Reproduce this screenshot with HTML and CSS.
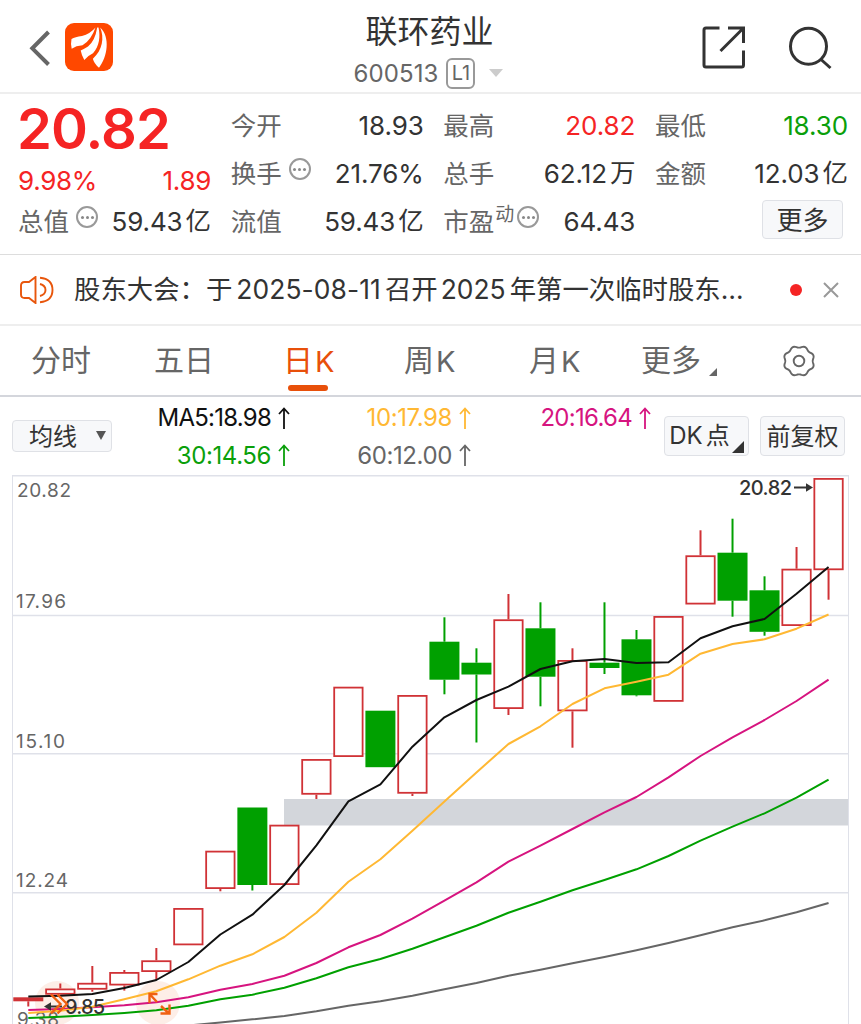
FILE: index.html
```html
<!DOCTYPE html>
<html lang="zh-CN">
<head>
<meta charset="utf-8">
<title>联环药业 600513</title>
<link rel="stylesheet" href="styles.css">
</head>
<body>
<div class="app">
  <header class="header">
    <div class="header-left">
      <svg class="back" width="24" height="40" viewBox="0 0 24 40"><path d="M21.500 4 5.300 20.300 21.500 36.500" fill="none" stroke="#666" stroke-width="4"/></svg>
      <svg class="logo" width="48" height="48" viewBox="0 0 48 48">
        <rect width="48" height="48" rx="9" fill="#ff4800"/>
        <path d="M30.500 4.500Q25 11 17 13Q10 14 6.500 16Q5.500 20.500 6.700 25.700Q11 22.800 17.500 22.300Q26 17.500 30.500 4.500Z" fill="#fff"/>
        <path d="M32.200 4.500Q30 18 23 23.500Q19 26 15.700 27.500Q16.500 32 19.300 37Q23 32.500 28 30.200C34.500 23.500 35.500 13 33.500 4.500Z" fill="#fff"/>
        <path d="M35.200 4.500C39.500 15 37.500 27 27.900 35.700Q29 40.500 34 44.700C42.500 34 45.500 14 35.200 4.500Z" fill="#fff"/>
      </svg>
    </div>
    <div class="title-block">
      <h1 class="title">联环药业</h1>
      <div class="code-row">
        <span class="code">600513</span><span class="level">L1</span>
        <svg width="14" height="8" viewBox="0 0 14 8"><path d="M0 0H14L7 8Z" fill="#ccc"/></svg>
      </div>
    </div>
    <div class="header-right">
      <svg width="44" height="44" viewBox="0 0 44 44" fill="none" stroke="#333" stroke-width="3">
        <path d="M17.500 2H4Q2 2 2 4V39Q2 41 4 41H39.500Q41.500 41 41.500 39V24.500"/><path d="M26 2H41.500V17M41 2.500 18.500 25"/>
      </svg>
      <svg width="44" height="44" viewBox="0 0 44 44" fill="none" stroke="#333" stroke-width="3">
        <circle cx="20.500" cy="20.300" r="18"/><path d="M32.500 33 42.500 42"/>
      </svg>
    </div>
  </header>

  <section class="quote">
    <div class="quote-main">
      <div class="price">20.82</div>
      <div class="change"><span>9.98%</span><span>1.89</span></div>
      <div class="cell"><span class="label">总值<i class="tip"></i></span><span class="val"><b>59.43</b><i class="unit">亿</i></span></div>
    </div>
    <div class="quote-col">
      <div class="cell"><span class="label">今开</span><span class="val">18.93</span></div>
      <div class="cell"><span class="label">换手<i class="tip"></i></span><span class="val">21.76%</span></div>
      <div class="cell"><span class="label">流值</span><span class="val"><b>59.43</b><i class="unit">亿</i></span></div>
    </div>
    <div class="quote-col">
      <div class="cell"><span class="label">最高</span><span class="val up">20.82</span></div>
      <div class="cell"><span class="label">总手</span><span class="val"><b>62.12</b><i class="unit">万</i></span></div>
      <div class="cell"><span class="label">市盈<em class="dyn">动</em><i class="tip tight"></i></span><span class="val">64.43</span></div>
    </div>
    <div class="quote-col">
      <div class="cell"><span class="label">最低</span><span class="val down">18.30</span></div>
      <div class="cell"><span class="label">金额</span><span class="val"><b>12.03</b><i class="unit">亿</i></span></div>
      <div class="cell end"><button class="btn more">更多</button></div>
    </div>
  </section>

  <section class="notice">
    <svg class="horn" width="34" height="28" viewBox="0 0 34 28" fill="none" stroke="#e8560c" stroke-width="1.900">
      <path d="M15.500 1V27L9 22H4.500Q1 22 1 18.500V9.500Q1 6 4.500 6H9Z"/><path d="M20 8Q25.500 9.500 25.500 14T20 20"/><path d="M20 1.800Q32.500 3 32.500 14T20 26.200"/>
    </svg>
    <div class="notice-text"><span>股东大会：</span><span>于</span><b class="date">2025-08-11</b><span>召开</span><b class="year">2025</b><span>年第一次临时股东</span><span class="dots">…</span></div>
    <i class="dot"></i>
    <svg width="16" height="16" viewBox="0 0 16 16"><path d="M1 1 15 15M15 1 1 15" stroke="#999" stroke-width="2"/></svg>
  </section>

  <nav class="tabs">
    <span class="tab t1">分时</span>
    <span class="tab t2">五日</span>
    <span class="tab t3 active">日<b>K</b></span>
    <span class="tab t4">周<b>K</b></span>
    <span class="tab t5">月<b>K</b></span>
    <span class="tab t6">更多<svg width="8" height="8" viewBox="0 0 8 8"><path d="M8 0V8H0Z" fill="#666"/></svg></span>
    <svg class="gear" width="34" height="32" viewBox="-17 -16 34 32" fill="none" stroke="#666" stroke-width="1.900">
      <path id="gear"/><circle r="5.300"/>
    </svg>
  </nav>

  <section class="indicators">
    <button class="btn ma-btn">均线<svg width="10" height="9" viewBox="0 0 10 9"><path d="M0 0H10L5 9Z" fill="#555"/></svg></button>
    <div class="ma-grid">
      <span class="ma black">MA5:18.98<svg class="arr" viewBox="0 0 12 22"><path d="M6 22V1.500M1 7 6 1.500 11 7"/></svg></span>
      <span class="ma orange">10:17.98<svg class="arr" viewBox="0 0 12 22"><path d="M6 22V1.500M1 7 6 1.500 11 7"/></svg></span>
      <span class="ma pink">20:16.64<svg class="arr" viewBox="0 0 12 22"><path d="M6 22V1.500M1 7 6 1.500 11 7"/></svg></span>
      <span class="ma green">30:14.56<svg class="arr" viewBox="0 0 12 22"><path d="M6 22V1.500M1 7 6 1.500 11 7"/></svg></span>
      <span class="ma gray">60:12.00<svg class="arr" viewBox="0 0 12 22"><path d="M6 22V1.500M1 7 6 1.500 11 7"/></svg></span>
    </div>
    <button class="btn dk">DK<span>点</span><svg width="12" height="12" viewBox="0 0 12 12"><path d="M12 0V12H0Z" fill="#333"/></svg></button>
    <button class="btn fq">前复权</button>
  </section>

  <svg class="chart" width="861" height="549" viewBox="0 475 861 549">
    <g class="grid">
      <path d="M12 475.500H849" stroke-width="2"/><path d="M12.500 475V1024M848.500 475V1024" stroke-width="1"/>
      <path d="M13 615.400H848M13 753.800H848M13 892.800H848" stroke-width="1.500"/>
    </g>
    <rect x="284" y="799" width="564" height="26.500" fill="#d3d6db"/>
    <circle cx="57" cy="1003" r="22" fill="#fdeee7"/><circle cx="158" cy="1003" r="22" fill="#fdeee7"/>
    <g class="axis">
      <text x="17" y="497" textLength="54">20.82</text><text x="16" y="608" textLength="50">17.96</text>
      <text x="16" y="747.500" textLength="49">15.10</text><text x="16" y="886.500" textLength="52">12.24</text><text x="17" y="1025.500" textLength="42">9.38</text>
    </g>
    <g id="candles"></g>
    <g class="lines" id="lines"></g>
    <g class="marks">
      <text x="739" y="495" textLength="53">20.82</text><path d="M794 487.500H808" stroke-width="2"/><path d="M813 487.500 806 483.300V491.700Z" class="tip-fill"/>
      <text x="65" y="1014" textLength="40">9.85</text><path d="M50 1006.500H62" stroke-width="2"/><path d="M44 1006.500 51 1002.300V1010.700Z" class="tip-fill"/>
    </g>
    <g class="hot">
      <path d="M51 994.500 60.500 1004 51 1013.500M57.500 994.500 67 1004 57.500 1013.500"/>
      <path d="M157.500 994H149.500V1003M149.500 994 157 1002M161 1006 169 1013.500M169.500 1004.500V1013.500H160.500"/>
    </g>
  </svg>
</div>
<script src="chart.js"></script>
</body>
</html>
```

FILE: styles.css
```css
* { box-sizing: border-box; }
body { margin: 0; background: #fff; overflow: hidden; font-family: Inter, "Noto Sans CJK SC", sans-serif; color: #333; }
b, i, em { font-weight: inherit; font-style: normal; }
.app { width: 861px; height: 1024px; overflow: hidden; display: flex; flex-direction: column; }

.header { height: 94px; flex: none; border-bottom: 2px solid #eee; display: grid; grid-template-columns: 200px 1fr 200px; }
.header-left { display: flex; align-items: center; padding: 3px 0 0 27px; gap: 14px; }
.header-left .logo { margin-bottom: 1px; }
.title-block { display: flex; flex-direction: column; align-items: center; padding-top: 9px; }
.title { margin: 0; padding-right: 2px; font-size: 32px; line-height: 46px; font-weight: 400; }
.code-row { display: flex; align-items: center; margin-top: 2px; height: 32px; padding-right: 4px; }
.code { font-size: 24px; color: #666; letter-spacing: .1px; }
.level { margin: 0 14px 0 8px; width: 29px; height: 31px; border: 2px solid #999; border-radius: 6px; font-size: 20px; line-height: 27px; text-align: center; color: #666; }
.header-right { display: flex; align-items: center; padding: 4px 29px 0 0; gap: 42px; justify-content: flex-end; }

.quote { height: 161px; flex: none; padding: 8px 13px 0 19px; border-bottom: 1px solid #ddd; display: grid; grid-template-columns: 192px 193px 192px 193px; justify-content: space-between; }
.price { height: 54px; line-height: 54px; margin-left: -2px; font-size: 56px; font-weight: 600; color: #f52424; letter-spacing: -.9px; white-space: nowrap; }
.change { height: 42px; line-height: 50px; margin-left: -1px; display: flex; justify-content: space-between; font-size: 26px; color: #f52424; letter-spacing: -.3px; }
.cell { height: 48px; display: flex; align-items: center; justify-content: space-between; white-space: nowrap; }
.quote-main .label { margin-left: -1px; }
.label { display: flex; align-items: center; font-size: 25.5px; color: #666; padding-bottom: 6px; }
.tip { width: 22px; height: 22px; margin: 0 0 4px 7px; border: 2px solid #999; border-radius: 50%; display: flex; align-items: center; justify-content: center; }
.tip::before { content: ""; width: 3px; height: 3px; border-radius: 50%; background: #888; box-shadow: -5px 0 #888, 5px 0 #888; }
.tip.tight { margin-left: 3px; }
.dyn { font-size: 19px; margin: 0 0 14px 1px; }
.val { font-size: 26px; line-height: 36px; height: 36px; letter-spacing: -.1px; }
.unit { display: inline-block; line-height: 30px; vertical-align: 1px; font-size: 25.5px; }
.val b { margin-right: 3px; }
.up { color: #f52424; }
.down { color: #0a9f0a; }
.end { justify-content: flex-end; padding: 0 5px 5px 0; }
.btn { margin: 0; padding: 0 0 2px; border: 1.500px solid #dfe1e6; border-radius: 4px; background: #f7f8fa; color: #333; font: inherit; font-size: 25px; display: flex; align-items: center; justify-content: center; white-space: nowrap; }
.more { width: 81px; height: 39px; font-size: 26px; }

.notice { height: 71px; flex: none; display: flex; align-items: center; padding: 0 21px 0 20px; border-bottom: 2px solid #eee; }
.notice-text { width: 672px; margin-left: 20px; padding-bottom: 4px; display: flex; align-items: baseline; font-size: 26.400px; white-space: nowrap; }
.date { margin: 0 4px 0 4px; letter-spacing: .1px; }
.year { margin: 0 4px 0 3px; }
.dot { width: 12px; height: 12px; border-radius: 50%; background: #f52424; margin: 0 21px 0 44px; }

.tabs { height: 71px; flex: none; display: flex; align-items: center; border-bottom: 2px solid #d4d6dc; padding-left: 31px; color: #666; font-size: 30px; }
.tab { height: 69px; line-height: 69px; display: flex; white-space: nowrap; }
.tab b { margin-left: 2px; font-size: 29px; padding-top: 1px; }
.t1 { width: 123px; } .t2 { width: 129px; } .t3 { width: 121px; } .t4 { width: 125px; } .t5 { width: 112px; } .t6 { width: 141px; }
.t6 svg { margin: 42px 0 0 8px; }
.active { color: #e8500a; position: relative; }
.active::after { content: ""; position: absolute; left: 5px; bottom: 4px; width: 40px; height: 6px; border-radius: 3px; background: #e8500a; }

.indicators { height: 78px; flex: none; display: flex; align-items: center; padding: 0 16px 0 12px; }
.ma-btn { width: 100px; height: 32px; font-size: 24px; padding: 0 0 4px 11px; gap: 19px; }
.ma-btn svg { margin-top: 3px; }
.ma-grid { width: 538px; margin-left: 14px; display: grid; grid-template-columns: 165px 180px 180px; grid-template-rows: 38px 37px; align-items: center; }
.ma { display: flex; align-items: center; justify-content: flex-end; gap: 7px; font-size: 24px; letter-spacing: -.3px; }
.arr { width: 12px; height: 22px; fill: none; stroke: currentColor; stroke-width: 1.800; }
.black { color: #111; letter-spacing: -.75px; } .orange { color: #ffb833; letter-spacing: -.4px; } .pink { color: #d6147f; letter-spacing: -.7px; } .green { color: #0a9f0a; letter-spacing: -.4px; } .gray { color: #666; letter-spacing: -.4px; }
.black, .green { padding-right: 1px; }
.dk { width: 85px; height: 40px; font-size: 24px; gap: 3px; }
.dk span { margin-bottom: 3px; }
.dk svg { margin: 24px 0 0 -1px; }
.fq { width: 85px; height: 40px; font-size: 24px; margin-left: 11px; padding-bottom: 4px; }

.chart { display: block; flex: none; }
.grid path { stroke: #dfe1e9; fill: none; }
.axis text { font-size: 19px; fill: #666; }
.lines polyline { fill: none; stroke-width: 2; stroke-linejoin: round; }
.marks text { font-size: 20px; font-weight: 500; fill: #333; }
.marks path { stroke: #333; }
.marks .tip-fill { fill: #333; stroke: none; }
.hot path { fill: none; stroke: #f06010; stroke-width: 2.400; }
```

FILE: chart.js
```js
const NS = 'http://www.w3.org/2000/svg';
const RED = '#d03236', GREEN = '#00a000';
// kind, body top, body bottom, high, low
const candles = [
  ['f', 997.3, 1001.3, 997.3, 1006.5], ['r', 988.5, 994.7, 983.5, 994.7], ['r', 982.8, 989.7, 966, 991.7],
  ['r', 972, 985.5, 970, 990.6], ['r', 960.3, 972, 948, 979.5], ['r', 908, 945.3, 908, 945.3],
  ['r', 850.7, 889, 850.7, 891.3], ['g', 807.5, 885, 807.5, 890.5], ['r', 824.7, 885, 824.7, 885],
  ['r', 759, 794.7, 759, 799], ['r', 686.7, 757, 686.7, 757], ['g', 710.7, 767.2, 710.7, 767.2],
  ['r', 695, 793.7, 695, 796], ['g', 641.7, 679.7, 617.3, 694.3], ['g', 662.7, 674.5, 648.3, 742.5],
  ['r', 619.3, 709, 594, 715], ['g', 628.3, 676.7, 602.3, 706.3], ['r', 660, 711.3, 648.3, 747.7],
  ['g', 662.7, 668, 602.3, 674], ['g', 639.3, 695.3, 630, 696.3], ['r', 616, 701.8, 616, 701.8],
  ['r', 555.3, 604.5, 530.3, 604.5], ['g', 552.7, 600.7, 518.7, 616.7], ['g', 590.3, 631.8, 576.3, 635.7],
  ['r', 568.7, 626, 547, 626], ['r', 478, 570.2, 478, 599.7]
];
const X = i => 28.3 + 32.01 * i;
function add(parent, tag, attrs) {
  const e = document.createElementNS(NS, tag);
  for (const k in attrs) e.setAttribute(k, attrs[k]);
  parent.appendChild(e);
}
const cg = document.getElementById('candles');
candles.forEach(([k, t, b, h, l], i) => {
  const x = X(i), c = k === 'g' ? GREEN : RED;
  if (h < t) add(cg, 'path', { d: `M${x} ${h}V${t}`, stroke: c, 'stroke-width': 2 });
  if (l > b) add(cg, 'path', { d: `M${x} ${b}V${l}`, stroke: c, 'stroke-width': 2 });
  if (k === 'r') add(cg, 'rect', { x: x - 14.2, y: t + 0.9, width: 28.4, height: b - t - 1.8, fill: '#fff', stroke: c, 'stroke-width': 1.8 });
  else add(cg, 'rect', { x: x - 15, y: t, width: 30, height: b - t, fill: c });
});
const series = {
  '#666': [null, null, null, null, null, 1025.5, 1022.5, 1019.3, 1016, 1011.3, 1005.7, 1001.3, 995.7, 989.3, 983, 975.7, 969.7, 963.3, 957, 950.3, 943, 935.3, 927.3, 920.3, 912.3, 903],
  '#00a000': [1018, 1016.7, 1015, 1013, 1010.3, 1005.7, 999.3, 994.7, 987.7, 978.3, 967.2, 959, 948.7, 937.3, 925.7, 912.7, 901.7, 890.3, 880, 869.3, 856, 840.7, 826.7, 813.3, 797.7, 779.7],
  '#d6147f': [1010, 1009, 1007.3, 1005.3, 1002.3, 997.3, 989.7, 984, 975.8, 963, 947.3, 935, 918.7, 900.7, 882.3, 861.7, 845.7, 829, 812.3, 797, 777.3, 756, 737.3, 720, 701, 679.7],
  '#ffb833': [1013, 1010.7, 1006.7, 999.3, 991.3, 979.3, 965.7, 954.3, 937, 912.7, 881.7, 859.3, 830.7, 801.5, 772.5, 744, 726.3, 704, 688.3, 681.7, 674.7, 653.7, 644, 639.3, 628.7, 614.5],
  '#111': [996.5, 995.8, 994, 988, 980, 962, 934.5, 914.7, 885, 845.3, 801.3, 784.3, 746.7, 717.3, 700, 686.7, 669, 661.3, 659, 663, 662.3, 638.3, 626.3, 619, 593.7, 567]
};
for (const c in series) {
  const pts = series[c].map((y, i) => y === null ? null : `${X(i)},${y}`).filter(Boolean).join(' ');
  add(document.getElementById('lines'), 'polyline', { points: pts, stroke: c });
}
// settings gear outline
let d = '';
for (let a = 0; a < 360; a += 4) {
  const t = a * Math.PI / 180, r = 14.2 + 0.9 * Math.cos(8 * t + Math.PI);
  d += (a ? 'L' : 'M') + (r * 1.03 * Math.cos(t)).toFixed(2) + ' ' + (r * Math.sin(t)).toFixed(2);
}
document.getElementById('gear').setAttribute('d', d + 'Z');
```
